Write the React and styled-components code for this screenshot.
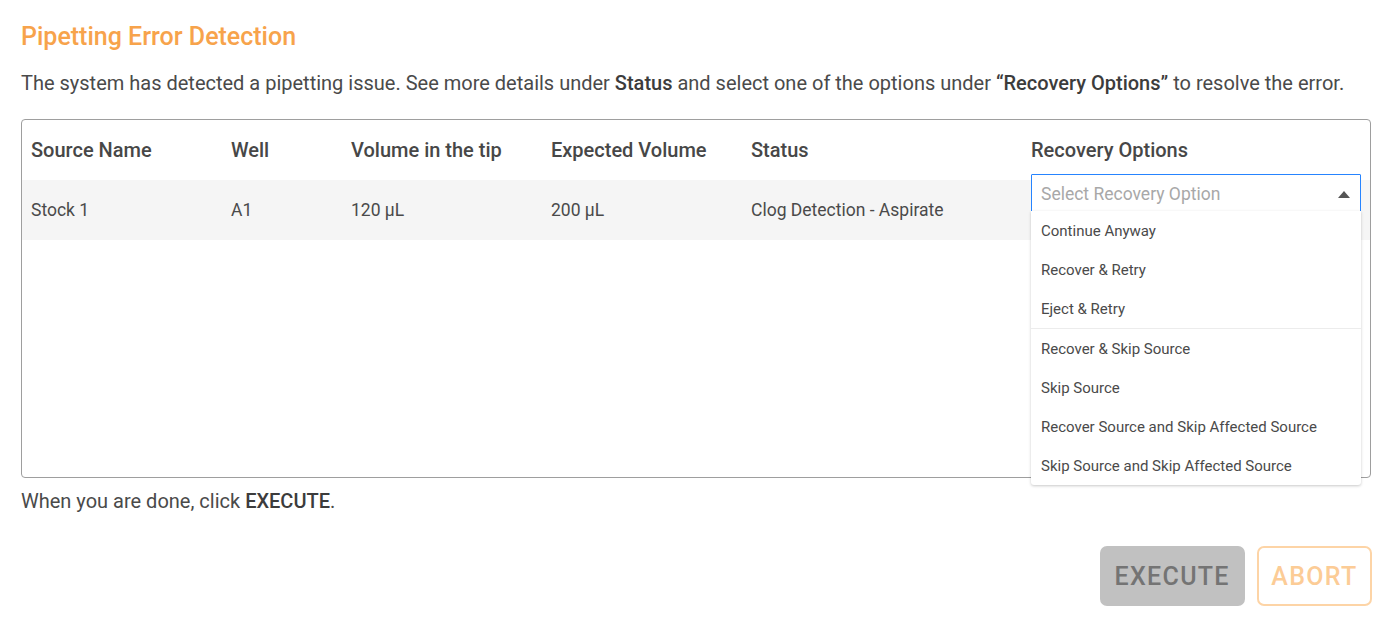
import React from 'react';
import styled, { createGlobalStyle } from 'styled-components';

const GlobalStyle = createGlobalStyle`
  html, body {
    margin: 0;
    padding: 0;
    background: #fff;
    font-family: Roboto, "Noto Sans", sans-serif;
    color: #4a4a4a;
  }
`;

const columns = ['Source Name', 'Well', 'Volume in the tip', 'Expected Volume', 'Status', 'Recovery Options'];
const widths = [200, 120, 200, 200, 280];

const optionGroups = [
  ['Continue Anyway', 'Recover & Retry', 'Eject & Retry'],
  ['Recover & Skip Source', 'Skip Source', 'Recover Source and Skip Affected Source', 'Skip Source and Skip Affected Source'],
];

const Page = styled.div`
  padding: 20px 20px 0 21px;
  display: flex;
  flex-direction: column;
`;

const Title = styled.h1`
  margin: 0;
  font-size: 25px;
  font-weight: 500;
  color: #f7a34b;
  line-height: 34px;
`;

const Lead = styled.p`
  margin: 15px 0 0;
  font-size: 20px;
  line-height: 28px;
  color: #4a4a4a;
  b { font-weight: 500; color: #3c3c3c; }
`;

const TableBox = styled.div`
  margin-top: 22px;
  height: 357px;
  border: 1px solid #9e9e9e;
  border-radius: 4px;
  display: flex;
  flex-direction: column;
`;

const Row = styled.div`
  display: grid;
  grid-template-columns: ${widths.map((w) => w + 'px').join(' ')} 1fr;
  align-items: center;
  height: ${(p) => p.$h}px;
  background: ${(p) => (p.$shade ? '#f5f5f5' : 'transparent')};
  padding-left: 9px;
`;

const HeadCell = styled.div`
  font-size: 20px;
  font-weight: 500;
  color: #474747;
`;

const Cell = styled.div`
  font-size: 17.5px;
  color: #4a4a4a;
  position: relative;
  align-self: stretch;
  display: flex;
  align-items: center;
`;

const SelectWrap = styled.div`
  position: absolute;
  top: -6px;
  left: 0;
  width: 330px;
  z-index: 2;
`;

const SelectBox = styled.div`
  height: 38px;
  border: 1px solid #2684ff;
  border-radius: 1px;
  display: flex;
  align-items: center;
  justify-content: space-between;
  padding: 0 10px 0 9px;
  background: #fff;
  font-size: 17.5px;
  color: #a8a8a8;
`;

const Caret = styled.span`
  width: 0;
  height: 0;
  border-left: 6px solid transparent;
  border-right: 6px solid transparent;
  border-bottom: 7px solid #555;
`;

const Menu = styled.div`
  margin-top: -3px;
  background: #fff;
  box-shadow: 0 1px 3px rgba(0, 0, 0, 0.22);
  border-radius: 0 0 3px 3px;
`;

const Group = styled.div`
  & + & {
    border-top: 1px solid #ececec;
  }
`;

const Option = styled.div`
  height: 39px;
  display: flex;
  align-items: center;
  padding-left: 10px;
  font-size: 15px;
  color: #4a4a4a;
`;

const Footer = styled.p`
  margin: 9px 0 0;
  font-size: 20px;
  line-height: 28px;
  color: #4a4a4a;
  b { font-weight: 500; color: #3c3c3c; }
`;

const Actions = styled.div`
  display: flex;
  justify-content: flex-end;
  gap: 12px;
  margin: 31px -1px 0 0;
`;

const Button = styled.button`
  height: 60px;
  padding: 0 ${(p) => (p.$outline ? 12.5 : 13)}px;
  border-radius: 7px;
  font-family: Roboto, sans-serif;
  font-size: 25px;
  font-weight: 500;
  letter-spacing: 1.3px;
  background: ${(p) => (p.$outline ? '#fff' : '#c1c1c1')};
  color: ${(p) => (p.$outline ? '#fccc96' : '#747474')};
  border: 2px solid ${(p) => (p.$outline ? '#fdd4a6' : '#c1c1c1')};
`;

export default function App() {
  return (
    <>
      <GlobalStyle />
      <Page>
        <Title>Pipetting Error Detection</Title>
        <Lead>
          The system has detected a pipetting issue. See more details under <b>Status</b> and select one of the options under <b>“Recovery Options”</b> to resolve the error.
        </Lead>
        <TableBox>
          <Row $h={60}>
            {columns.map((c) => (
              <HeadCell key={c}>{c}</HeadCell>
            ))}
          </Row>
          <Row $h={60} $shade>
            <Cell>Stock 1</Cell>
            <Cell>A1</Cell>
            <Cell>120 µL</Cell>
            <Cell>200 µL</Cell>
            <Cell>Clog Detection - Aspirate</Cell>
            <Cell>
              <SelectWrap>
                <SelectBox>
                  Select Recovery Option
                  <Caret />
                </SelectBox>
                <Menu>
                  {optionGroups.map((g, i) => (
                    <Group key={i}>
                      {g.map((o) => (
                        <Option key={o}>{o}</Option>
                      ))}
                    </Group>
                  ))}
                </Menu>
              </SelectWrap>
            </Cell>
          </Row>
        </TableBox>
        <Footer>
          When you are done, click <b>EXECUTE</b>.
        </Footer>
        <Actions>
          <Button>EXECUTE</Button>
          <Button $outline>ABORT</Button>
        </Actions>
      </Page>
    </>
  );
}
